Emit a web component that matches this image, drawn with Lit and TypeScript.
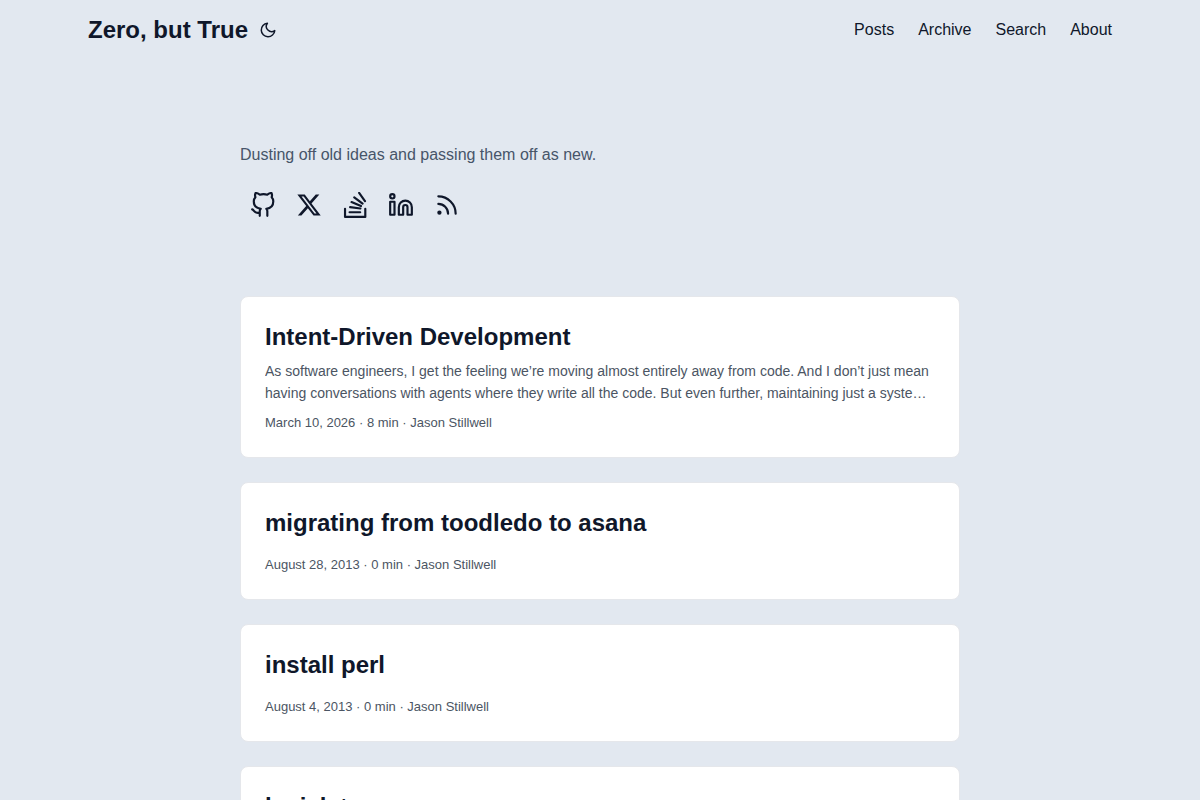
import { LitElement, html, css, svg, nothing } from "lit";
import { customElement } from "lit/decorators.js";

interface Post {
  title: string;
  summary?: string;
  meta: string;
}

const posts: Post[] = [
  {
    title: "Intent-Driven Development",
    summary:
      "As software engineers, I get the feeling we’re moving almost entirely away from code. And I don’t just mean having conversations with agents where they write all the code. But even further, maintaining just a system of intent.",
    meta: "March 10, 2026 · 8 min · Jason Stillwell",
  },
  { title: "migrating from toodledo to asana", meta: "August 28, 2013 · 0 min · Jason Stillwell" },
  { title: "install perl", meta: "August 4, 2013 · 0 min · Jason Stillwell" },
  { title: "legislate", meta: "August 4, 2013 · 0 min · Jason Stillwell" },
];

const socials = [
  {
    name: "GitHub",
    icon: svg`<path d="M9 19c-5 1.5-5-2.5-7-3m14 6v-3.87a3.37 3.37 0 0 0-.94-2.61c3.14-.35 6.44-1.54 6.44-7A5.44 5.44 0 0 0 20 4.77 5.07 5.07 0 0 0 19.91 1S18.73.65 16 2.48a13.38 13.38 0 0 0-7 0C6.27.65 5.09 1 5.09 1A5.07 5.07 0 0 0 5 4.77a5.44 5.44 0 0 0-1.5 3.78c0 5.42 3.3 6.61 6.44 7A3.37 3.37 0 0 0 9 18.13V22"/>`,
  },
  {
    name: "X",
    icon: svg`<path fill="currentColor" stroke="none" d="M18.244 2.25h3.308l-7.227 8.26 8.502 11.24H16.17l-5.214-6.817L4.99 21.75H1.68l7.73-8.835L1.254 2.25H8.08l4.713 6.231zm-1.161 17.52h1.833L7.084 4.126H5.117z"/>`,
  },
  {
    name: "Stack Overflow",
    icon: svg`<path d="M2.8 15.5V23h18.7v-7.5M7 18.7h9.8M7.5 14l9.5 1.2M8.8 9.3l8.7 3.7M11.3 4.9l7.7 5.8M15.8.8l5.4 7.6"/>`,
  },
  {
    name: "LinkedIn",
    icon: svg`<path d="M16 8a6 6 0 0 1 6 6v7h-4v-7a2 2 0 0 0-2-2 2 2 0 0 0-2 2v7h-4v-7a6 6 0 0 1 6-6z"/><path d="M2 9h4v12H2z"/><circle cx="4" cy="4" r="2"/>`,
  },
  {
    name: "RSS",
    icon: svg`<path d="M4 11a9 9 0 0 1 9 9M4 4a16 16 0 0 1 16 16"/><circle cx="5" cy="19" r="1"/>`,
  },
];

@customElement("app-root")
export class AppRoot extends LitElement {
  static styles = css`
    :host {
      display: block;
      min-height: 100vh;
      background: #e2e8f0;
      color: #0f172a;
      font: 16px/26px "Liberation Sans", Arial, sans-serif;
    }
    * { box-sizing: border-box; }
    a { color: inherit; text-decoration: none; }
    h1, h2, p, ul { margin: 0; padding: 0; }
    svg {
      display: block;
      fill: none;
      stroke: currentColor;
      stroke-width: 2;
      stroke-linecap: round;
      stroke-linejoin: round;
    }
    .nav {
      display: flex;
      justify-content: space-between;
      max-width: 1072px;
      margin: 0 auto;
      padding: 0 24px;
      line-height: 60px;
    }
    .brand { display: flex; align-items: center; }
    .logo { font-size: 24px; font-weight: 700; }
    .theme {
      margin: 0 0 0 4px;
      padding: 0 7px;
      border: 0;
      background: none;
      color: inherit;
      cursor: pointer;
    }
    .theme svg { width: 18px; height: 18px; }
    .menu { display: flex; gap: 24px; list-style: none; }
    .main { max-width: 768px; margin: 0 auto; padding: 24px; }
    .intro {
      display: flex;
      flex-direction: column;
      gap: 14px;
      min-height: 188px;
      margin-bottom: 24px;
      padding: 58px 0 40px;
    }
    .tagline { color: #475569; }
    .socials { display: flex; }
    .social { padding: 10px; }
    .social svg { width: 26px; height: 26px; }
    .posts { display: flex; flex-direction: column; gap: 24px; }
    .card {
      padding: 24px;
      background: #fff;
      border: 1px solid #e5e7eb;
      border-radius: 8px;
    }
    .title { font-size: 24px; line-height: 31px; }
    .summary {
      margin: 8px 0;
      font-size: 14px;
      line-height: 22px;
      color: #4b5563;
      display: -webkit-box;
      -webkit-box-orient: vertical;
      -webkit-line-clamp: 2;
      overflow: hidden;
    }
    .meta { font-size: 13px; line-height: 21px; color: #4b5563; }
    .title + .meta { margin-top: 16px; }
  `;

  render() {
    return html`
      <header>
        <nav class="nav">
          <div class="brand">
            <a class="logo" href="#">Zero, but True</a>
            <button class="theme" aria-label="Toggle theme">
              <svg viewBox="0 0 24 24"><path d="M21 12.79A9 9 0 1 1 11.21 3 7 7 0 0 0 21 12.79z"/></svg>
            </button>
          </div>
          <ul class="menu">
            ${["Posts", "Archive", "Search", "About"].map((item) => html`<li><a href="#">${item}</a></li>`)}
          </ul>
        </nav>
      </header>
      <main class="main">
        <section class="intro">
          <p class="tagline">Dusting off old ideas and passing them off as new.</p>
          <div class="socials">
            ${socials.map(
              (s) => html`<a class="social" href="#" aria-label=${s.name}><svg viewBox="0 0 24 24">${s.icon}</svg></a>`
            )}
          </div>
        </section>
        <div class="posts">
          ${posts.map(
            (post) => html`
              <article class="card">
                <h2 class="title"><a href="#">${post.title}</a></h2>
                ${post.summary ? html`<p class="summary">${post.summary}</p>` : nothing}
                <p class="meta">${post.meta}</p>
              </article>
            `
          )}
        </div>
      </main>
    `;
  }
}
